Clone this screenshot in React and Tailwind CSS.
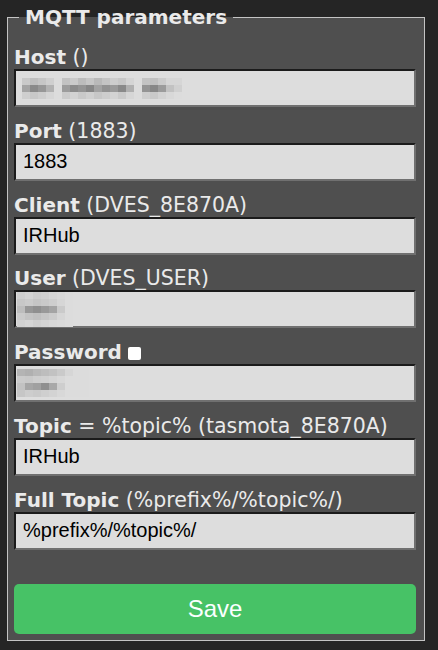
import { useState } from "react";

const verdana = "font-['DejaVu_Sans',Verdana,sans-serif]";
const arial = "font-['Liberation_Sans',Arial,sans-serif]";

// pixelated (blurred) secrets, rows of grey cells
const hostMosaic = [
  ["c9c9c9", "bfbfbf", "c6c6c6", "cfcfcf", "dcdcdc", "c2c2c2", "cacaca", "bcbcbc", "c6c6c6", "b9b9b9", "c4c4c4", "cdcdcd", "c7c7c7", "d4d4d4", "dcdcdc", "c3c3c3", "c0c0c0", "cbcbcb", "d6d6d6", "d6d6d6"],
  ["a4a4a4", "8a8a8a", "979797", "b2b2b2", "dcdcdc", "9c9c9c", "8b8b8b", "949494", "868686", "a2a2a2", "929292", "9a9a9a", "898989", "b0b0b0", "dcdcdc", "949494", "878787", "9b9b9b", "c2c2c2", "d0d0d0"],
  ["cfcfcf", "c8c8c8", "cecece", "d6d6d6", "dcdcdc", "cbcbcb", "d2d2d2", "c9c9c9", "d0d0d0", "c7c7c7", "cdcdcd", "d3d3d3", "cacaca", "d6d6d6", "dcdcdc", "cecece", "c9c9c9", "d2d2d2", "d8d8d8", "dcdcdc"],
];

const userMosaic = [
  ["cfcfcf", "d4d4d4", "cdcdcd", "d0d0d0", "d6d6d6", "d9d9d9", "dcdcdc"],
  ["c7c7c7", "cbcbcb", "c5c5c5", "c9c9c9", "cecece", "d6d6d6", "dcdcdc"],
  ["bdbdbd", "979797", "8f8f8f", "999999", "a4a4a4", "cacaca", "dcdcdc"],
  ["cbcbcb", "c4c4c4", "c0c0c0", "c6c6c6", "cccccc", "d6d6d6", "dcdcdc"],
  ["d2d2d2", "d6d6d6", "d0d0d0", "d4d4d4", "d8d8d8", "dadada", "dcdcdc"],
];

const passMosaic = [
  ["b4b4b4", "b0b0b0", "b8b8b8", "bdbdbd", "c2c2c2", "cacaca", "d6d6d6", "dcdcdc", "dcdcdc"],
  ["cbcbcb", "c9c9c9", "cecece", "d0d0d0", "d4d4d4", "d8d8d8", "dcdcdc", "dcdcdc", "dcdcdc"],
  ["c2c2c2", "a6a6a6", "a0a0a0", "8f8f8f", "a8a8a8", "cecece", "dcdcdc", "dcdcdc", "dcdcdc"],
  ["c6c6c6", "cdcdcd", "cacaca", "cfcfcf", "d3d3d3", "d8d8d8", "dcdcdc", "dcdcdc", "dcdcdc"],
];

const fields = [
  { label: "Host", hint: " ()", mosaic: hostMosaic, cell: "w-[8px] h-[7px]", pad: "pl-[6px]" },
  { label: "Port", hint: " (1883)", value: "1883" },
  { label: "Client", hint: " (DVES_8E870A)", value: "IRHub" },
  { label: "User", hint: " (DVES_USER)", mosaic: userMosaic, cell: "w-[8px] h-[7px]", pad: "pl-[1px]" },
  { label: "Password", checkbox: true, mosaic: passMosaic, cell: "w-[8px] h-[7px]", pad: "pl-[1px]" },
  { label: "Topic", hint: " = %topic% (tasmota_8E870A)", value: "IRHub" },
  { label: "Full Topic", hint: " (%prefix%/%topic%/)", value: "%prefix%/%topic%/" },
];

const inputBox =
  "w-full h-[38px] border-2 border-t-[#1b1b1b] border-l-[#1b1b1b] border-r-[#707070] border-b-[#707070] bg-[#dddddd] text-black text-[20px] outline-none";

function Mosaic({ rows, cell }) {
  return (
    <div className="flex flex-col">
      {rows.map((row, i) => (
        <div key={i} className="flex">
          {row.map((c, j) => (
            <div key={j} className={cell} style={{ background: `#${c}` }} />
          ))}
        </div>
      ))}
    </div>
  );
}

function Field({ f }) {
  return (
    <div className="flex flex-col">
      <div className={`${verdana} text-[20px] leading-[23px] text-[#eaeaea] whitespace-pre`}>
        <b>{f.label}</b>
        <span className="text-[20.5px]">{f.hint}</span>
        {f.checkbox && (
          <>
            {" "}
            <span className="inline-block w-[13px] h-[13px] bg-white rounded-[2px] align-[-1px]" />
          </>
        )}
      </div>
      {f.mosaic ? (
        <div className={`${inputBox} flex items-center ${f.pad}`}>
          <Mosaic rows={f.mosaic} cell={f.cell} />
        </div>
      ) : (
        <input readOnly defaultValue={f.value} className={`${inputBox} ${arial} px-[7px]`} />
      )}
    </div>
  );
}

export default function App() {
  const [saving, setSaving] = useState(false);

  return (
    <div className="w-[438px] h-[650px] bg-[#252525] pt-[6px] pl-[7px]">
      <fieldset className="w-[418px] border border-[#c4c4c4] bg-[#4f4f4f] pl-[6px] pr-[8px] pb-[6px]">
        <legend className={`${verdana} ml-[5px] px-[6px] text-[20px] leading-[23px] font-bold text-[#eaeaea]`}>
          MQTT parameters
        </legend>
        <div className="flex flex-col gap-[12.8px] pt-[17px]">
          {fields.map((f) => (
            <Field key={f.label} f={f} />
          ))}
        </div>
        <button
          onClick={() => setSaving(!saving)}
          className={`${arial} mt-[34px] w-full h-[50px] rounded-[5px] bg-[#47c266] text-[#faffff] text-[24px]`}
        >
          Save
        </button>
      </fieldset>
    </div>
  );
}
